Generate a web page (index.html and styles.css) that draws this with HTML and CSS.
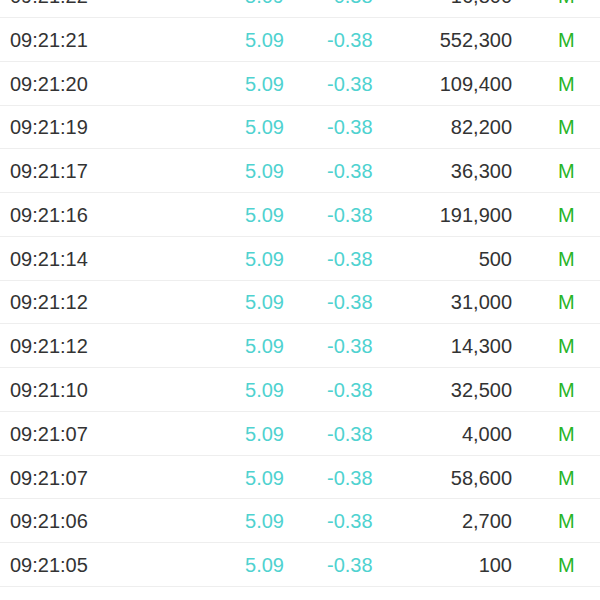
FILE: index.html
```html
<!DOCTYPE html>
<html lang="en">
<head>
<meta charset="utf-8">
<title>Trades</title>
<link rel="stylesheet" href="styles.css">
</head>
<body>
<div class="trades">
  <div class="row"><span class="time">09:21:22</span><span class="price">5.09</span><span class="chg">-0.38</span><span class="vol">16,800</span><span class="flag">M</span></div>
  <div class="row"><span class="time">09:21:21</span><span class="price">5.09</span><span class="chg">-0.38</span><span class="vol">552,300</span><span class="flag">M</span></div>
  <div class="row"><span class="time">09:21:20</span><span class="price">5.09</span><span class="chg">-0.38</span><span class="vol">109,400</span><span class="flag">M</span></div>
  <div class="row"><span class="time">09:21:19</span><span class="price">5.09</span><span class="chg">-0.38</span><span class="vol">82,200</span><span class="flag">M</span></div>
  <div class="row"><span class="time">09:21:17</span><span class="price">5.09</span><span class="chg">-0.38</span><span class="vol">36,300</span><span class="flag">M</span></div>
  <div class="row"><span class="time">09:21:16</span><span class="price">5.09</span><span class="chg">-0.38</span><span class="vol">191,900</span><span class="flag">M</span></div>
  <div class="row"><span class="time">09:21:14</span><span class="price">5.09</span><span class="chg">-0.38</span><span class="vol">500</span><span class="flag">M</span></div>
  <div class="row"><span class="time">09:21:12</span><span class="price">5.09</span><span class="chg">-0.38</span><span class="vol">31,000</span><span class="flag">M</span></div>
  <div class="row"><span class="time">09:21:12</span><span class="price">5.09</span><span class="chg">-0.38</span><span class="vol">14,300</span><span class="flag">M</span></div>
  <div class="row"><span class="time">09:21:10</span><span class="price">5.09</span><span class="chg">-0.38</span><span class="vol">32,500</span><span class="flag">M</span></div>
  <div class="row"><span class="time">09:21:07</span><span class="price">5.09</span><span class="chg">-0.38</span><span class="vol">4,000</span><span class="flag">M</span></div>
  <div class="row"><span class="time">09:21:07</span><span class="price">5.09</span><span class="chg">-0.38</span><span class="vol">58,600</span><span class="flag">M</span></div>
  <div class="row"><span class="time">09:21:06</span><span class="price">5.09</span><span class="chg">-0.38</span><span class="vol">2,700</span><span class="flag">M</span></div>
  <div class="row"><span class="time">09:21:05</span><span class="price">5.09</span><span class="chg">-0.38</span><span class="vol">100</span><span class="flag">M</span></div>
  <div class="row"><span class="time">09:21:04</span><span class="price">5.09</span><span class="chg">-0.38</span><span class="vol">3,200</span><span class="flag">M</span></div>
</div>
</body>
</html>
```
FILE: styles.css
```css
html, body {
  margin: 0;
  padding: 0;
  background: #ffffff;
}
body {
  overflow: hidden;
  height: 600px;
  font-family: "Liberation Sans", Arial, sans-serif;
  font-size: 20px;
  color: #333333;
}
.trades {
  margin-top: -25.8px;
}
.row {
  box-sizing: border-box;
  height: 43.77px;
  border-bottom: 1px solid #eeeeee;
  display: grid;
  grid-template-columns: 184px 90px 136px 92px 1fr;
  align-items: center;
  padding-left: 10px;
  padding-top: 2px;
}
.time {
  color: #333333;
}
.price {
  color: #4fd2d0;
  text-align: right;
}
.chg {
  color: #4fd2d0;
  padding-left: 43px;
}
.vol {
  text-align: right;
  color: #333333;
}
.flag {
  color: #28b428;
  padding-left: 46px;
}
```
